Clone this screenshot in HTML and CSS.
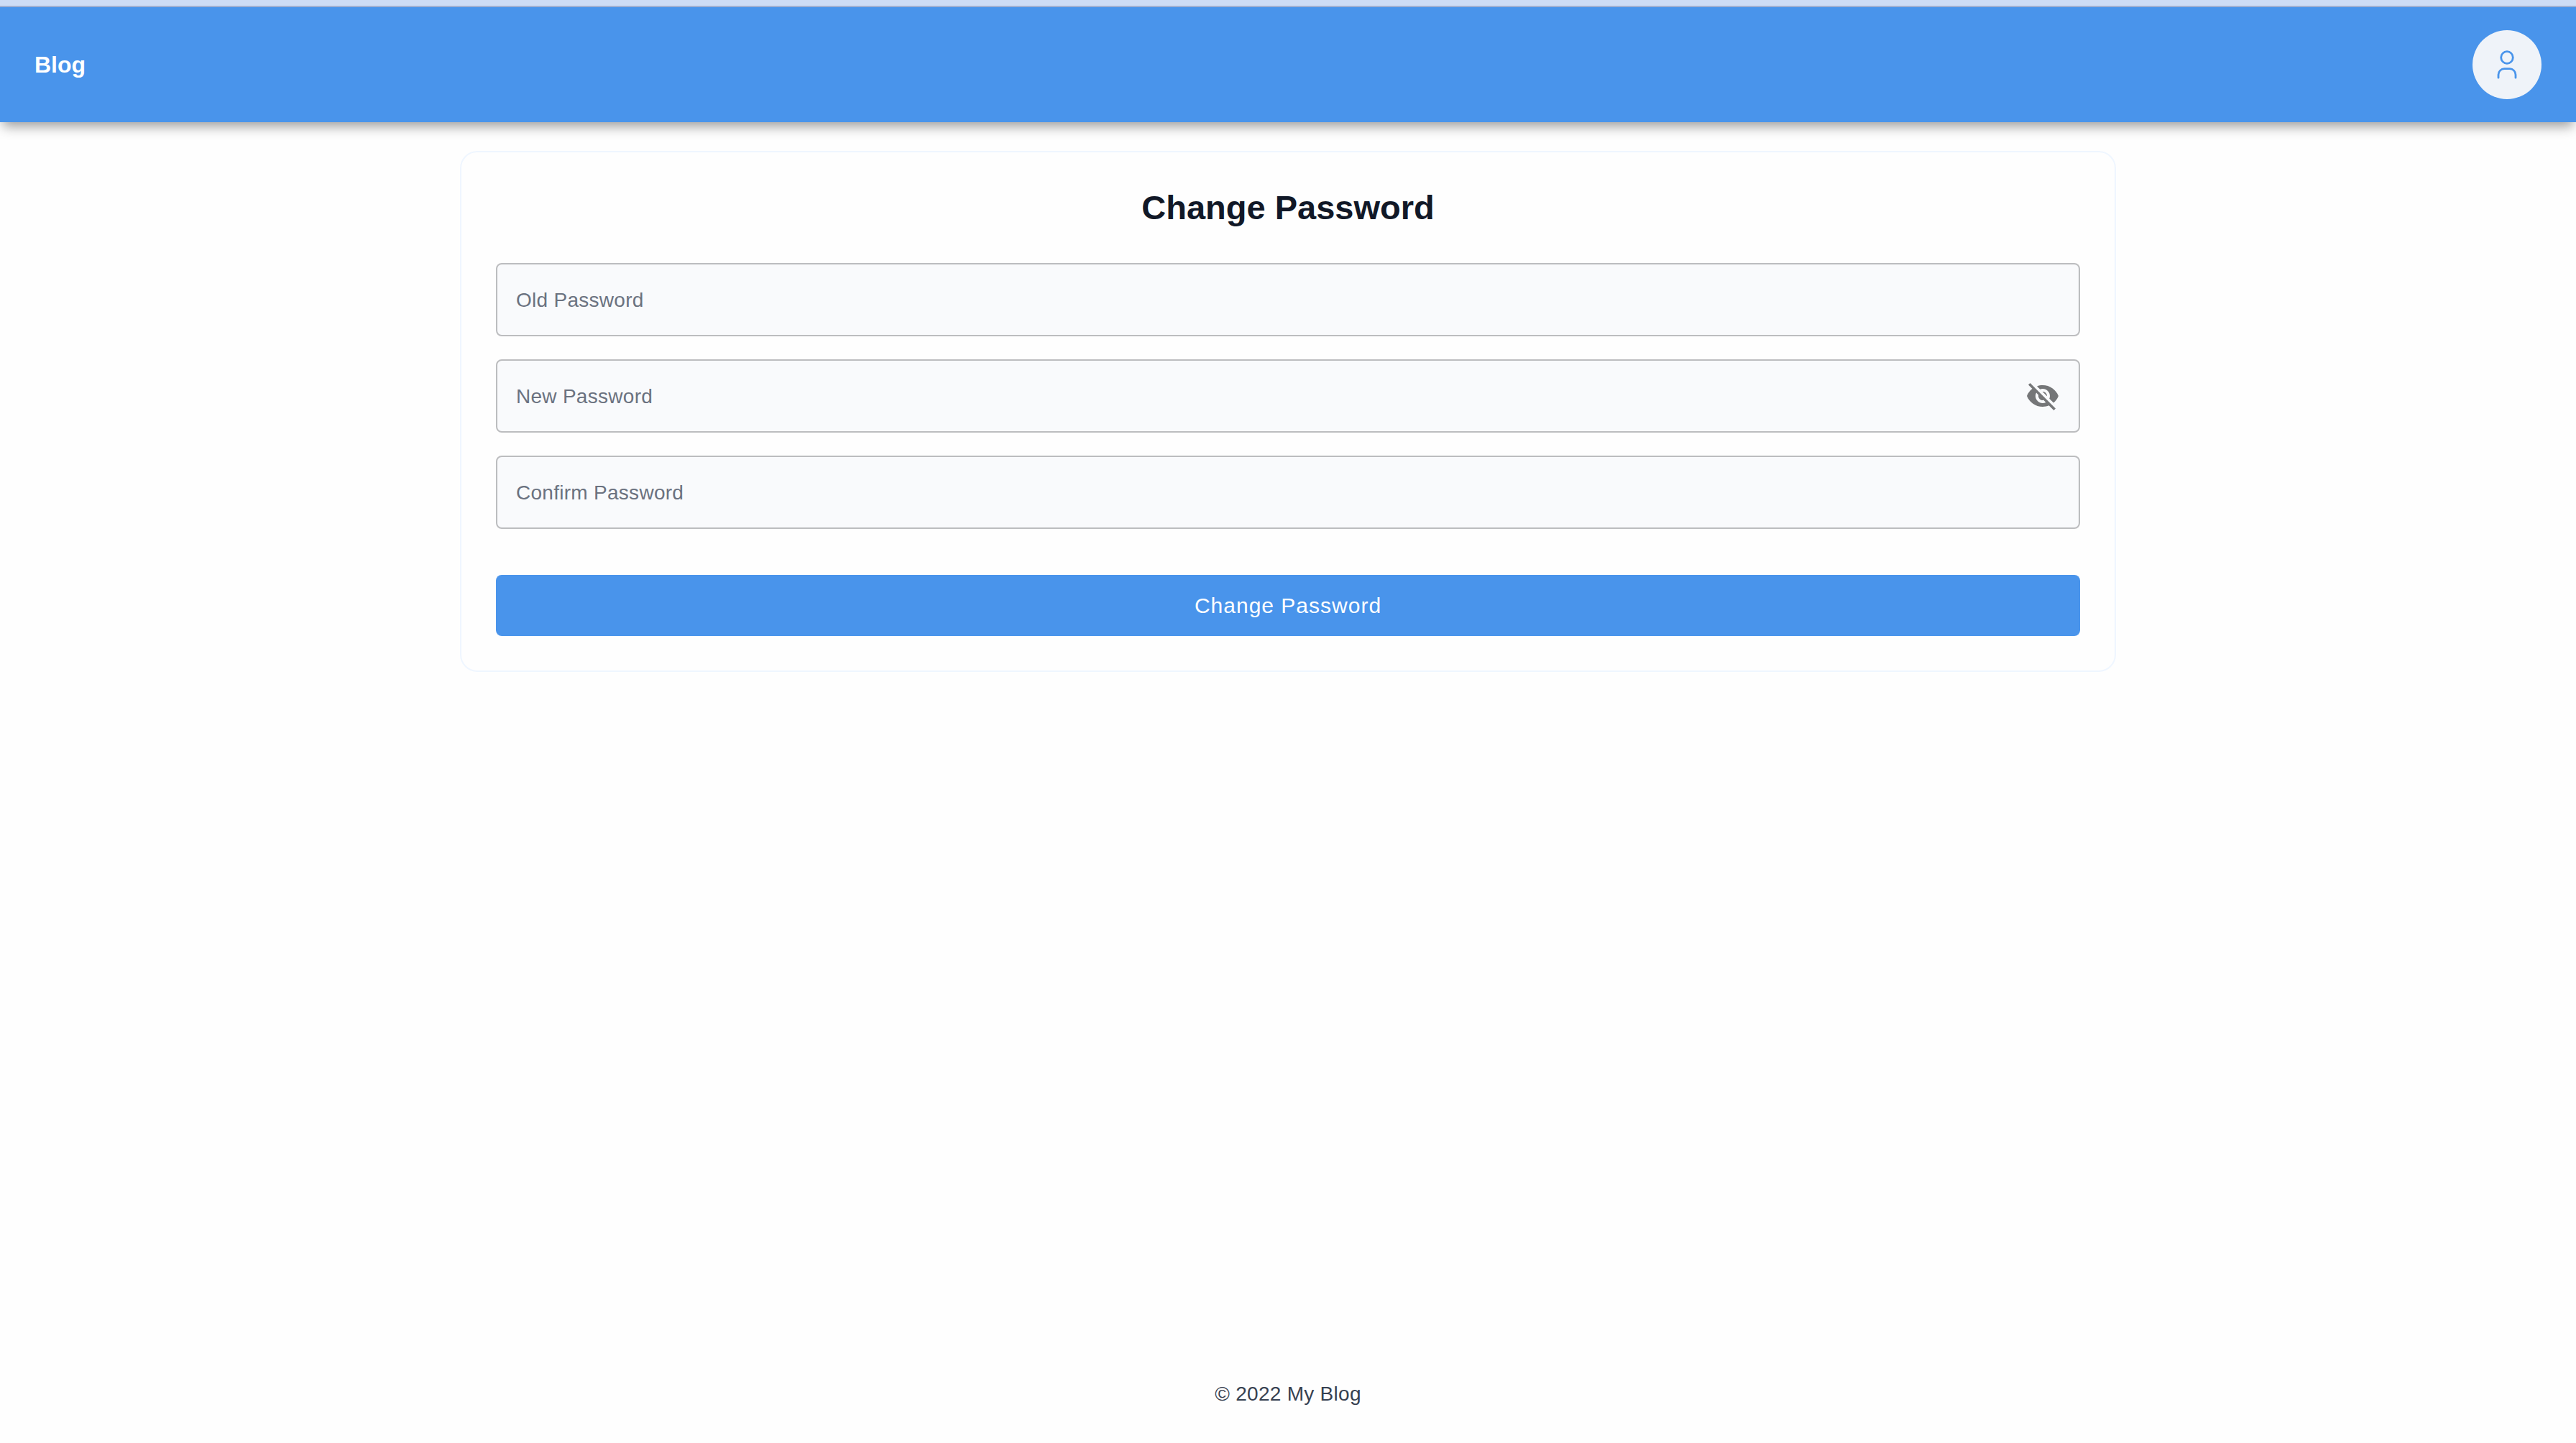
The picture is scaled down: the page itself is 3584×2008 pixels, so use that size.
FILE: index.html
```html
<!DOCTYPE html>
<html lang="en">
<head>
  <meta charset="utf-8">
  <meta name="viewport" content="width=device-width, initial-scale=1">
  <title>Change Password</title>
  <link rel="stylesheet" href="styles.css">
</head>
<body>
  <header class="navbar">
    <a class="brand" href="#">Blog</a>
    <button class="avatar" type="button" aria-label="Account">
      <svg class="avatar-icon" viewBox="0 0 48 48" aria-hidden="true">
        <circle cx="24" cy="14" r="8.3"/>
        <path d="M12 42.2v-4.2a8.3 8.3 0 0 1 8.3-8.3h7.4a8.3 8.3 0 0 1 8.3 8.3v4.2"/>
      </svg>
    </button>
  </header>

  <main class="content">
    <form class="card">
      <h1 class="title">Change Password</h1>
      <div class="field">
        <label class="field-label" for="old-password">Old Password</label>
        <input class="field-input" id="old-password" type="password">
      </div>
      <div class="field">
        <label class="field-label" for="new-password">New Password</label>
        <input class="field-input" id="new-password" type="password">
        <button class="toggle" type="button" aria-label="Show password">
          <svg class="toggle-icon" viewBox="0 0 24 24" aria-hidden="true">
            <path d="M12 7c2.76 0 5 2.24 5 5 0 .65-.13 1.26-.36 1.83l2.92 2.92c1.51-1.26 2.7-2.89 3.43-4.75-1.73-4.39-6-7.5-11-7.5-1.4 0-2.74.25-3.98.7l2.16 2.16C10.74 7.13 11.35 7 12 7zM2 4.27l2.28 2.28.46.46C3.08 8.3 1.78 10.02 1 12c1.73 4.39 6 7.5 11 7.5 1.55 0 3.03-.3 4.38-.84l.42.42L19.73 22 21 20.73 3.27 3 2 4.27zM7.53 9.8l1.55 1.55c-.05.21-.08.43-.08.65 0 1.66 1.34 3 3 3 .22 0 .44-.03.65-.08l1.55 1.55c-.67.33-1.41.53-2.2.53-2.76 0-5-2.24-5-5 0-.79.2-1.53.53-2.2zm4.31-.78l3.15 3.15.02-.16c0-1.66-1.34-3-3-3l-.17.01z"/>
          </svg>
        </button>
      </div>
      <div class="field">
        <label class="field-label" for="confirm-password">Confirm Password</label>
        <input class="field-input" id="confirm-password" type="password">
      </div>
      <button class="submit" type="submit">Change Password</button>
    </form>
  </main>

  <footer class="footer">© 2022 My Blog</footer>
</body>
</html>
```
FILE: styles.css
```css
* {
  box-sizing: border-box;
}

body {
  display: flex;
  flex-direction: column;
  min-height: 100vh;
  margin: 0;
  border-top: 8px solid #cddcf5;
  background: #fefefe;
  color: #374151;
  font-family: "Liberation Sans", Arial, Helvetica, sans-serif;
  font-size: 28px;
  line-height: 40px;
}

button,
input {
  margin: 0;
  padding: 0;
  border: 0;
  background: none;
  color: inherit;
  font: inherit;
}

button {
  cursor: pointer;
}

.navbar {
  display: flex;
  align-items: center;
  justify-content: space-between;
  height: 162px;
  padding: 0 48px;
  border-top: 2px solid #9fb0d3;
  background: #4994eb;
  box-shadow: 0 10px 16px -4px rgba(0, 0, 0, 0.38);
}

.brand {
  color: #fff;
  font-size: 32px;
  font-weight: 700;
  text-decoration: none;
}

.avatar {
  display: grid;
  place-items: center;
  width: 96px;
  height: 96px;
  border-radius: 50%;
  background: #eff3f9;
}

.avatar-icon {
  width: 48px;
  height: 48px;
  fill: none;
  stroke: #4994eb;
  stroke-width: 2.8;
  stroke-linecap: round;
}

.content {
  flex: 1;
  padding: 40px 48px;
}

.card {
  display: flex;
  flex-direction: column;
  gap: 32px;
  max-width: 2304px;
  margin: 0 auto;
  padding: 48px;
  border: 2px solid #eff6ff;
  border-radius: 24px;
}

.title {
  margin: 0 0 16px;
  color: #111827;
  font-size: 47px;
  font-weight: 700;
  line-height: 58px;
  text-align: center;
}

.field {
  display: grid;
  grid-template-columns: 1fr auto;
  align-items: center;
  height: 102px;
  padding: 0 26px;
  border: 2px solid #bcbdbf;
  border-radius: 8px;
  background: #f9fafc;
}

.field-label,
.field-input {
  grid-row: 1;
  grid-column: 1;
}

.field-label {
  padding-top: 2px;
  color: #6b7280;
  letter-spacing: 0.01em;
  pointer-events: none;
}

.field-input {
  width: 100%;
  height: 98px;
  outline: 0;
}

.field:focus-within {
  border-color: #4994eb;
}

.field:focus-within .field-label {
  color: #4994eb;
}

.toggle {
  grid-row: 1;
  grid-column: 2;
  display: grid;
}

.toggle-icon {
  width: 48px;
  height: 48px;
  fill: #757678;
}

.submit {
  height: 85px;
  margin-top: 32px;
  border-radius: 8px;
  background: #4994eb;
  color: #fff;
  font-size: 30px;
  letter-spacing: 1px;
}

.footer {
  padding: 0 48px 48px;
  letter-spacing: 0.01em;
  text-align: center;
}
```
